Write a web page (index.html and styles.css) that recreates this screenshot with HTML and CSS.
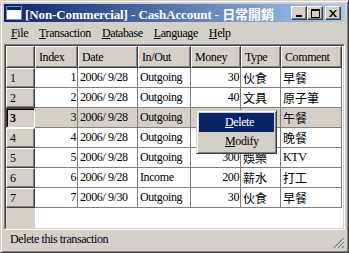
FILE: index.html
```html
<!DOCTYPE html>
<html lang="en">
<head>
    <meta charset="UTF-8">
    <title>CashAccount</title>
    <link rel="stylesheet" href="styles.css">
</head>
<body>
    <div class="window">
        <div class="titlebar">
            <svg class="app-icon" width="16" height="14" viewBox="0 0 16 14">
                <rect x="0.5" y="0.5" width="15" height="13" fill="#fff" stroke="#6f8fc8"/>
                <rect x="1" y="1" width="14" height="3" fill="#0a246a"/>
            </svg>
            <span class="title">[Non-Commercial] - CashAccount - 日常開銷</span>
            <div class="title-buttons">
                <span class="tbtn"><svg width="8" height="8" viewBox="0 0 8 8"><rect x="1" y="6" width="6" height="2" fill="#000"/></svg></span>
                <span class="tbtn"><svg width="9" height="9" viewBox="0 0 9 9"><rect x="0.5" y="0.5" width="8" height="8" fill="none" stroke="#000"/><rect x="0" y="0" width="9" height="2" fill="#000"/></svg></span>
                <span class="tbtn close"><svg width="8" height="7" viewBox="0 0 8 7"><path d="M0 0h2l2 2.5 2-2.5h2l-3 3.5 3 3.5h-2l-2-2.5-2 2.5h-2l3-3.5z" fill="#000"/></svg></span>
            </div>
        </div>

        <div class="menubar">
            <span class="menu-item"><u>F</u>ile</span>
            <span class="menu-item"><u>T</u>ransaction</span>
            <span class="menu-item"><u>D</u>atabase</span>
            <span class="menu-item"><u>L</u>anguage</span>
            <span class="menu-item"><u>H</u>elp</span>
        </div>

        <div class="grid-frame">
            <div class="grid-view">
                <div class="grid">
                    <div class="head corner"></div>
                    <div class="head">Index</div>
                    <div class="head">Date</div>
                    <div class="head">In/Out</div>
                    <div class="head">Money</div>
                    <div class="head">Type</div>
                    <div class="head">Comment</div>

                    <div class="rh">1</div>
                    <div class="cell num">1</div>
                    <div class="cell">2006/ 9/28</div>
                    <div class="cell">Outgoing</div>
                    <div class="cell num">30</div>
                    <div class="cell cjk">伙食</div>
                    <div class="cell cjk">早餐</div>

                    <div class="rh">2</div>
                    <div class="cell num">2</div>
                    <div class="cell">2006/ 9/28</div>
                    <div class="cell">Outgoing</div>
                    <div class="cell num">40</div>
                    <div class="cell cjk">文具</div>
                    <div class="cell cjk">原子筆</div>

                    <div class="rh current">3</div>
                    <div class="cell num sel">3</div>
                    <div class="cell sel">2006/ 9/28</div>
                    <div class="cell sel">Outgoing</div>
                    <div class="cell num sel">50</div>
                    <div class="cell cjk sel">伙食</div>
                    <div class="cell cjk sel">午餐</div>

                    <div class="rh">4</div>
                    <div class="cell num">4</div>
                    <div class="cell">2006/ 9/28</div>
                    <div class="cell">Outgoing</div>
                    <div class="cell num">60</div>
                    <div class="cell cjk">伙食</div>
                    <div class="cell cjk">晚餐</div>

                    <div class="rh">5</div>
                    <div class="cell num">5</div>
                    <div class="cell">2006/ 9/28</div>
                    <div class="cell">Outgoing</div>
                    <div class="cell num">300</div>
                    <div class="cell cjk">娛樂</div>
                    <div class="cell">KTV</div>

                    <div class="rh">6</div>
                    <div class="cell num">6</div>
                    <div class="cell">2006/ 9/28</div>
                    <div class="cell">Income</div>
                    <div class="cell num">200</div>
                    <div class="cell cjk">薪水</div>
                    <div class="cell cjk">打工</div>

                    <div class="rh">7</div>
                    <div class="cell num">7</div>
                    <div class="cell">2006/ 9/30</div>
                    <div class="cell">Outgoing</div>
                    <div class="cell num">30</div>
                    <div class="cell cjk">伙食</div>
                    <div class="cell cjk">早餐</div>
                </div>
            </div>
        </div>

        <div class="statusbar">
            <span>Delete this transaction</span>
            <svg class="grip" width="12" height="12" viewBox="0 0 12 12">
                <path d="M11 1L1 11M11 5L5 11M11 9L9 11" stroke="#808080" stroke-width="1.4"/>
                <path d="M11 2.4L2.4 11M11 6.4L6.4 11M11 10.4L10.4 11" stroke="#fff" stroke-width="0.8"/>
            </svg>
        </div>

        <div class="context-menu">
            <div class="ctx-item active"><u>D</u>elete</div>
            <div class="ctx-item"><u>M</u>odify</div>
        </div>
    </div>
</body>
</html>
```

FILE: styles.css
```css
body {
    margin: 0;
    background: #d4d0c8;
    font-family: "Liberation Serif", "Noto Sans CJK TC", serif;
    font-size: 12px;
    letter-spacing: -0.4px;
    color: #000;
}
.window {
    position: relative;
    width: 349px;
    height: 253px;
    box-sizing: border-box;
    border: 1px solid;
    border-color: #d4d0c8 #404040 #404040 #d4d0c8;
    box-shadow: inset 1px 1px #fff, inset -1px -1px #808080;
    padding: 3px;
    display: flex;
    flex-direction: column;
    background: #d4d0c8;
}
.titlebar {
    height: 18px;
    flex: none;
    display: flex;
    align-items: center;
    padding: 0 4px 0 2px;
    background: linear-gradient(to right, #0a246a, #a6caf0);
    color: #fff;
    font-weight: bold;
    font-size: 13px;
    letter-spacing: -0.1px;
}
.app-icon {
    flex: none;
    margin-right: 3px;
}
.title {
    flex: 1;
    white-space: nowrap;
    overflow: hidden;
}
.title-buttons {
    display: flex;
}
.tbtn {
    width: 16px;
    height: 14px;
    box-sizing: border-box;
    background: #d4d0c8;
    border: 1px solid;
    border-color: #fff #404040 #404040 #fff;
    box-shadow: inset -1px -1px #808080;
    display: flex;
    align-items: center;
    justify-content: center;
}
.tbtn.close {
    margin-left: 2px;
}
.menubar {
    height: 22px;
    flex: none;
    display: flex;
    align-items: center;
    padding-left: 1.5px;
}
.menu-item {
    padding: 0 5.5px;
    white-space: nowrap;
}
.grid-frame {
    height: 186px;
    flex: none;
    box-sizing: border-box;
    border: 1px solid;
    border-color: #808080 #fff #fff #808080;
}
.grid-view {
    height: 100%;
    box-sizing: border-box;
    border: 1px solid;
    border-color: #404040 #d4d0c8 #d4d0c8 #404040;
    background: linear-gradient(to right, #d4d0c8 29px, #fff 29px);
}
.grid {
    display: grid;
    grid-template-columns: 29px 43px 60px 53px 50px 40px 61px;
    grid-template-rows: 22px;
    grid-auto-rows: 20px;
}
.grid > div {
    box-sizing: border-box;
    white-space: nowrap;
    overflow: hidden;
    display: flex;
    align-items: center;
}
.head {
    background: #d4d0c8;
    border: 1px solid;
    border-color: #fff #404040 #404040 #fff;
    box-shadow: inset -1px -1px #808080;
    padding-left: 3px;
}
.rh {
    background: #d4d0c8;
    border: 1px solid;
    border-color: #fff #404040 #404040 #fff;
    box-shadow: inset -1px -1px #808080;
    padding-left: 3px;
}
.rh.current {
    font-weight: bold;
    border-color: #404040 #fff #fff #404040;
    box-shadow: inset 1px 1px #000;
}
.cell {
    background: #fff;
    border-right: 1px solid #808080;
    border-bottom: 1px solid #808080;
    padding: 0 1px 0 2px;
}
.cell.num {
    justify-content: flex-end;
}
.cell.cjk {
    letter-spacing: 0;
}
.cell.sel {
    background: #d4d0c8;
}
.statusbar {
    flex: 1;
    display: flex;
    align-items: center;
    justify-content: space-between;
    padding-left: 6px;
}
.grip {
    align-self: flex-end;
}
.context-menu {
    position: absolute;
    left: 195px;
    top: 109px;
    width: 81px;
    box-sizing: border-box;
    padding: 2px;
    background: #d4d0c8;
    border: 1px solid;
    border-color: #d4d0c8 #404040 #404040 #d4d0c8;
    box-shadow: inset 1px 1px #fff, inset -1px -1px #808080;
}
.ctx-item {
    height: 19px;
    display: flex;
    align-items: center;
    padding-left: 26px;
}
.ctx-item.active {
    background: #0a246a;
    color: #fff;
}
```
